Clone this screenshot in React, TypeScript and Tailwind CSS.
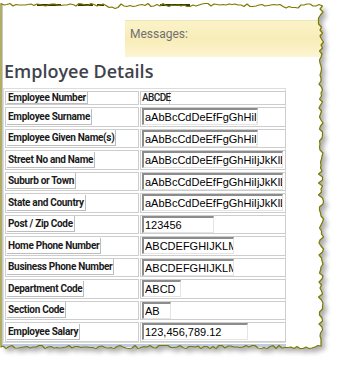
import React from "react";

type Row = {
  label: string;
  value: string;
  plain?: boolean;
  inputW?: string;
};

const LONG = "aAbBcCdDeEfFgGhHiIjJkKlLmMnN";

const rows: Row[] = [
  { label: "Employee Number", value: "ABCDE", plain: true },
  { label: "Employee Surname", value: LONG, inputW: "w-[116px]" },
  { label: "Employee Given Name(s)", value: LONG, inputW: "w-[116px]" },
  { label: "Street No and Name", value: LONG, inputW: "w-[141px]" },
  { label: "Suburb or Town", value: LONG, inputW: "w-[141px]" },
  { label: "State and Country", value: LONG, inputW: "w-[141px]" },
  { label: "Post / Zip Code", value: "123456", inputW: "w-[72px]" },
  { label: "Home Phone Number", value: "ABCDEFGHIJKLMNOP", inputW: "w-[92px]" },
  { label: "Business Phone Number", value: "ABCDEFGHIJKLMNOP", inputW: "w-[92px]" },
  { label: "Department Code", value: "ABCD", inputW: "w-[39px]" },
  { label: "Section Code", value: "AB", inputW: "w-[29px]" },
  { label: "Employee Salary", value: "123,456,789.12", inputW: "w-[106px]" },
];

// torn paper edge, made once with a fixed seed so it never changes
let seed = 11;
const rnd = () => {
  seed = (seed * 16807) % 2147483647;
  return seed / 2147483647;
};
const r = (n: number) => Math.round(n * 2) / 2;

function tornEdge() {
  const pts: [number, number][] = [];
  for (let x = 1; x <= 321; x += 3) {
    let y = 5 + (rnd() - 0.5) * 3;
    if (x > 108 && x < 120) y = 8 + (rnd() - 0.5) * 2;
    if (x > 284 && x < 300) y = 7 + (rnd() - 0.5) * 2;
    pts.push([x, r(y)]);
  }
  for (let y = 6; y <= 340; y += 3) {
    pts.push([r(321 + (rnd() - 0.5) * 5), y]);
  }
  for (let x = 321; x >= 1; x -= 3) {
    pts.push([x, r(347 + (rnd() - 0.5) * 3.5)]);
  }
  pts.push([1, 347]);
  return pts;
}

const edge = tornEdge();
const edgeD = "M" + edge.map((p) => p.join(" ")).join(" L") + " Z";
const shadowD =
  "M" + edge.map((p) => `${p[0] + 4} ${p[1] + 4}`).join(" L") + " Z";

const TornFrame: React.FC = () => (
  <svg
    className="absolute inset-0 pointer-events-none"
    width="338"
    height="365"
    viewBox="0 0 338 365"
  >
    <defs>
      <mask id="outside">
        <rect x="0" y="0" width="338" height="365" fill="white" />
        <path d={edgeD} fill="black" />
      </mask>
      <filter id="soft" x="-10%" y="-10%" width="120%" height="120%">
        <feGaussianBlur stdDeviation="2.5" />
      </filter>
    </defs>
    <g mask="url(#outside)">
      <rect x="0" y="0" width="338" height="365" fill="white" />
      <path d={shadowD} fill="#000" opacity="0.32" filter="url(#soft)" />
    </g>
    {/* bits of a dark toolbar showing under the top tear */}
    <rect x="37" y="4" width="24" height="2" fill="#3b3a00" />
    <rect x="78" y="4" width="15" height="2" fill="#3b3a00" />
    <rect x="97" y="4" width="7" height="2" fill="#3b3a00" />
    <rect x="160" y="4" width="30" height="2" fill="#2f3a10" />
    <path
      d={edgeD}
      fill="none"
      stroke="#7d7a00"
      strokeWidth="1.2"
      strokeLinejoin="round"
    />
  </svg>
);

const App: React.FC = () => {
  return (
    <div className="relative w-[338px] h-[365px] overflow-hidden bg-white pl-[2px]">
      <div className="border-l border-[#c9c9c9] pt-[20px] h-full">
        <div
          className="ml-[122px] h-[37px] border-t border-[#efe4b4] bg-gradient-to-b from-[#fbf3c9] via-[#f8ecb8] to-[#fcf5d2] pl-[5px] pt-[4px] text-[12px] text-[#707070]"
          style={{ fontFamily: 'Roboto, "Liberation Sans", sans-serif' }}
        >
          Messages:
        </div>
        <h1
          className="mt-[4px] pl-[1px] text-[18px] leading-[20px] font-semibold text-[#3f434c]"
          style={{ fontFamily: '"Open Sans", "Liberation Sans", sans-serif' }}
        >
          Employee Details
        </h1>
        <div
          className="mt-[7px] w-[283px] border border-[#dcdcdc] px-[1px] pt-[2px] grid grid-cols-[134px_146px] gap-x-[1px] gap-y-[2px]"
          style={{ fontFamily: '"Liberation Sans", Arial, sans-serif' }}
        >
          {rows.map((row) => (
            <React.Fragment key={row.label}>
              <div
                className={`border border-[#cdcdcd] flex items-center pl-[1px] ${
                  row.plain ? "h-[14px]" : "h-[19.5px]"
                }`}
              >
                <span
                  className={`inline-block border-r border-b border-[#bdbdbd] px-[1px] text-[10px] font-bold tracking-[-0.3px] text-[#1a1a1a] ${
                    row.plain ? "h-[12px] leading-[12px]" : "h-[16px] leading-[16px]"
                  }`}
                  style={{ fontFamily: 'Roboto, "Liberation Sans", sans-serif' }}
                >
                  {row.label}
                </span>
              </div>
              <div
                className={`border border-[#cdcdcd] flex items-center pl-[1px] ${
                  row.plain ? "h-[14px]" : "h-[19.5px]"
                }`}
              >
                {row.plain ? (
                  <span
                    className="inline-block h-[12px] leading-[12px] w-[28px] border-r border-[#cfcfcf] text-[10px] font-medium tracking-[-0.6px] text-[#222]"
                    style={{ fontFamily: 'Roboto, "Liberation Sans", sans-serif' }}
                  >
                    {row.value}
                  </span>
                ) : (
                  <input
                    readOnly
                    defaultValue={row.value}
                    className={`${row.inputW} h-[17px] border-t-2 border-l-2 border-t-[#8c8c8c] border-l-[#8c8c8c] border-r border-b border-r-[#e4e4e4] border-b-[#e4e4e4] bg-white pl-[1px] text-[11px] leading-[14px] text-black outline-none`}
                  />
                )}
              </div>
            </React.Fragment>
          ))}
        </div>
        <div className="mt-[1px] h-[3px] w-[283px] bg-[#bccce6]" />
      </div>
      <TornFrame />
    </div>
  );
};

export default App;
